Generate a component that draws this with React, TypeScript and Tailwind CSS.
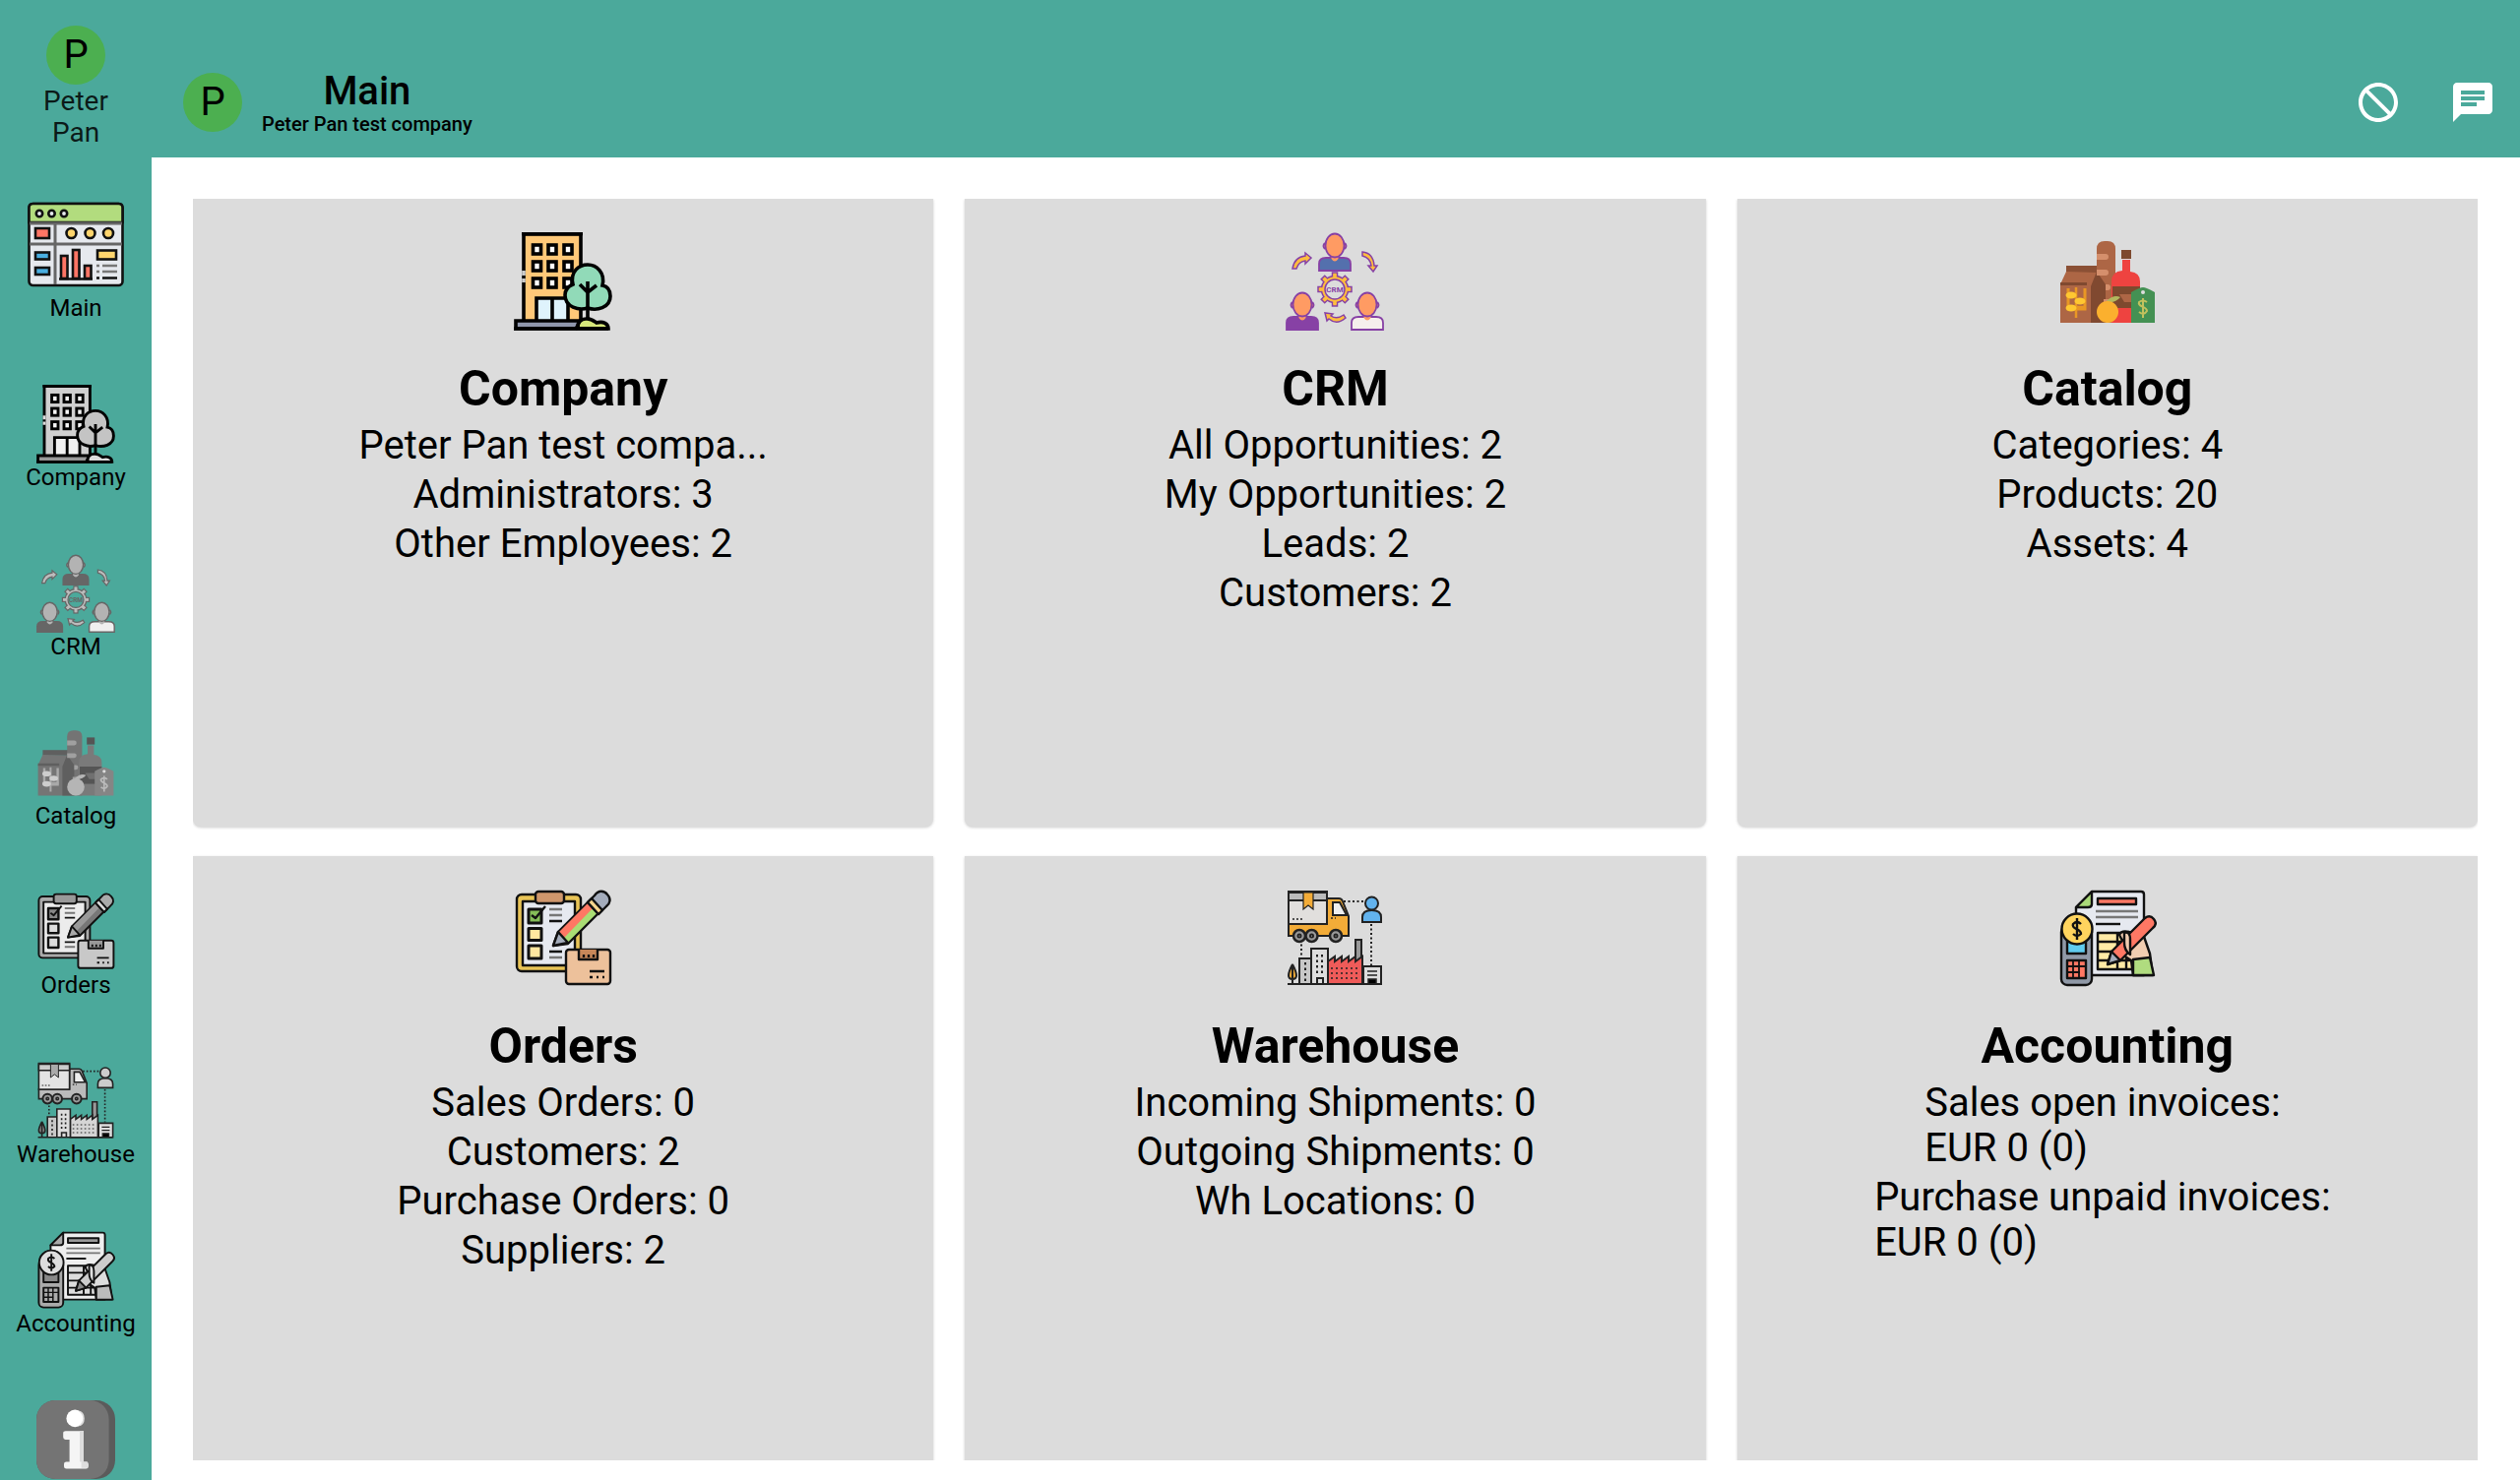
import React from "react";

type P = { mono?: boolean; className?: string };

const K = "#111";

function Svg({ children, className, box = "0 0 100 100" }: { children: React.ReactNode; className?: string; box?: string }) {
  return <svg viewBox={box} className={className} aria-hidden="true">{children}</svg>;
}

function MainIcon({ className }: P) {
  return (
    <Svg className={className}>
      <g stroke={K} strokeWidth="2.6">
        <rect x="2.5" y="8" width="95" height="83" rx="4" fill="#e6e9ee" />
        <path d="M2.500 27V12q0-4 4-4h87q4 0 4 4v15z" fill="#b2dc7e" />
        <g fill="#e6e9ee"><circle cx="13" cy="18" r="3.200" /><circle cx="25.500" cy="18" r="3.200" /><circle cx="38" cy="18" r="3.200" /></g>
        <g stroke="#666" strokeWidth="3"><path d="M3 28h94M3 49h94M29 28v62" /></g>
        <rect x="9" y="33" width="14" height="10" fill="#ff7565" />
        <g fill="#ffd56d"><circle cx="45.500" cy="38" r="5" /><circle cx="64.500" cy="38" r="5" /><circle cx="83" cy="38" r="5" /></g>
        <g fill="#49aee0"><rect x="9" y="57.500" width="14" height="7" /><rect x="9" y="73" width="14" height="7" /></g>
        <g fill="#ff7565"><rect x="35" y="61" width="6.500" height="23" /><rect x="47" y="55" width="6.500" height="29" /><rect x="59" y="71" width="6.500" height="13" /></g>
        <rect x="72" y="55.500" width="19" height="9" fill="#ffd56d" />
        <path d="M33 84.500h34" />
        <path d="M71 71h3M71 77h3M77 71h15M77 77h15" stroke="#777" />
        <path d="M71 83.500h3M77 83.500h15" />
      </g>
    </Svg>
  );
}

function CompanyIcon({ mono, className }: P) {
  const wall = mono ? "#d0d0d0" : "#ffc878";
  const tree = mono ? "#c4c4c4" : "#91dab8";
  return (
    <Svg className={className}>
      <g stroke="#000" strokeWidth="3.6">
        <path d="M10 89V2h58v87" fill={wall} />
        <path d="M8 1.500h62" />
        <path d="M10 39v5M10 47v4" stroke={mono ? "#ddd" : "#ccc"} />
        <g fill={mono ? "#f5f5f5" : "#fff"}>
          <rect x="19.500" y="13" width="8" height="9" /><rect x="35" y="13" width="8" height="9" /><rect x="51" y="13" width="8" height="9" />
          <rect x="19.500" y="30" width="8" height="9" /><rect x="35" y="30" width="8" height="9" /><rect x="51" y="30" width="8" height="9" />
          <rect x="19.500" y="47" width="8" height="9" /><rect x="35" y="47" width="8" height="9" /><rect x="51" y="47" width="8" height="9" />
        </g>
        <path d="M23 89V67h32v22M39 67v22" fill={mono ? "#f0f0f0" : "#dff3fc"} />
        <path d="M2 98v-8h66l-5 8z" fill={mono ? "#999" : "#9097ad"} />
        <path d="M75 77C66 80 52 76 52 64c0-6 3-9 8-11-3-13 6-20 15-20s18 8 15 21c5 1 8 5 8 11 0 12-14 15-23 12z" fill={tree} />
        <path d="M75 50v38M67 53l8 8 9-7" fill="none" />
        <path d="M65 98c-1-7 4-10 8-10 5-1 8 2 11 4 7-2 12 1 12 6z" fill={mono ? "#ddd" : "#d7e87b"} />
        <path d="M0 98h96" />
      </g>
    </Svg>
  );
}

function Person({ x, y, head, coat, line }: { x: number; y: number; head: string; coat: string; line: string }) {
  return (
    <g transform={`translate(${x} ${y})`} stroke={line} strokeWidth="1.8">
      <path d="M-10 10q-3 3 0 6M10 10q3 3 0 6" fill={head} />
      <path d="M-16 38V31q0-6 7-6H9q7 0 7 6v7z" fill={coat} />
      <path d="M-3.500 20v6q3.500 5 7 0v-6z" fill={head} stroke="none" />
      <ellipse cx="0" cy="12.500" rx="9.500" ry="12" fill={head} />
    </g>
  );
}

const teeth = [0, 45, 90, 135, 180, 225, 270, 315];

function CrmIcon({ mono, className }: P) {
  const line = mono ? "#666" : "#8741a5";
  const head = mono ? "#b3b3b3" : "#ff9b63";
  const gold = mono ? "#bcbcbc" : "#ffbd3e";
  return (
    <Svg className={className}>
      <Person x={50} y={1} head={head} coat={mono ? "#666" : "#5470ad"} line={line} />
      <Person x={17} y={61} head={head} coat={mono ? "#666" : "#8741a5"} line={line} />
      <Person x={83} y={61} head={head} coat={mono ? "#f0f0f0" : "#f6efec"} line={line} />
      <g fill={gold} stroke={line} strokeWidth="1.500">
        <path d="M7 37q2-12 13-13v-3l6 5-6 6v-3q-7 1-9 8zM78 20q11 1 12 14h3l-4 6-5-6h3q-1-8-9-10zM61 87q-9 8-17 1l-2 2-2-8 8 1-2 2q6 4 13-1z" />
        {teeth.map((a) => <rect key={a} x="47.500" y="41" width="5" height="6" transform={`rotate(${a} 50 58)`} />)}
        <circle cx="50" cy="58" r="13.500" />
        {teeth.map((a) => <rect key={a} x="48.200" y="43" width="3.600" height="4" stroke="none" transform={`rotate(${a} 50 58)`} />)}
        <circle cx="50" cy="58" r="10" fill={mono ? "#4ba99b" : "#dcdcdc"} />
      </g>
      <text x="50" y="61" textAnchor="middle" fill={line} className="font-['Roboto',sans-serif] text-[8px] font-bold">CRM</text>
    </Svg>
  );
}

function CatalogIcon({ mono, className }: P) {
  const c = (m: string, f: string) => (mono ? m : f);
  return (
    <Svg className={className}>
      <path d="M8 34h32v7H8z" fill={c("#5f5f5f", "#8b5035")} />
      <path d="M39 92V17q0-8 8-8h3q8 0 8 8v75z" fill={c("#747474", "#ad6645")} />
      <path d="M8 40 2 53v39h37V41z" fill={c("#757575", "#ad6645")} />
      <path d="M2 51h27v3H2zM33 92V55l6-15 9 13v39z" fill={c("#5f5f5f", "#804930")} />
      <path d="M39 22h9q3 0 3 3t-3 3h-9zM39 38h9q3 0 3 3t-3 3h-9zM48 53h2q3 0 3 3t-3 3h-2zM46 68h7v5h-7z" fill={c("#a0a0a0", "#d58f6c")} />
      <path d="M65 28h8v12q10 1 10 10v42H54V50q0-10 11-11z" fill={c("#7a7a7a", "#ee4340")} />
      <path d="M64 18h10v9H64z" fill={c("#555", "#7d492e")} />
      <path d="M55 55h28v22H55z" fill={c("#555", "#7d492e")} />
      <path d="M62 63h22v8H67z" fill={c("#707070", "#ad6645")} />
      <path d="M74 92V61q9-5 12-5t12 5v31z" fill={c("#858585", "#449153")} />
      <circle cx="86" cy="61" r="2" fill={c("#ddd", "#ddd")} />
      <path d="M90 71q-4-3-8 0c-2 5 8 4 8 9q-3 5-8 1M86 67v20" fill="none" stroke={c("#bbb", "#c2c15d")} strokeWidth="2" />
      <path d="M49 70q7-7 14-4-5 6-12 5z" fill={c("#b5b5b5", "#b2b85e")} />
      <circle cx="50" cy="81" r="11" fill={c("#b5b5b5", "#fbb02e")} />
      <path d="M10 57v21h17V57" fill="none" stroke={c("#aaa", "#e99725")} strokeWidth="3" />
      <path d="M18 56v31M8 76h20" stroke={c("#aaa", "#e99725")} strokeWidth="2.500" />
      <g fill={c("#cdcdcd", "#ffc731")}><ellipse cx="13" cy="64" rx="5.500" ry="3.500" /><ellipse cx="22" cy="70" rx="5.500" ry="3.500" /><ellipse cx="13" cy="77" rx="5.500" ry="3.500" /></g>
    </Svg>
  );
}

function OrdersIcon({ mono, className }: P) {
  const c = (m: string, f: string) => (mono ? m : f);
  return (
    <Svg className={className}>
      <g stroke={K} strokeWidth="2.400" strokeLinejoin="round">
        <rect x="3" y="5" width="65" height="78" rx="5" fill={c("#aaa", "#e9c456")} />
        <path d="M9 12h53v65H9z" fill={c("#ececec", "#e6e9f0")} />
        <rect x="22" y="2" width="29" height="12" rx="3" fill={c("#999", "#cf976c")} />
        <g strokeWidth="3"><rect x="15" y="20" width="13" height="14" fill={c("#888", "#85bd58")} /><rect x="15" y="39.500" width="13" height="12" fill={c("#ddd", "#ffe7a0")} /><rect x="15" y="57" width="13" height="13" fill={c("#ddd", "#ffe7a0")} /></g>
        <path d="m18 26 4 3 10-12" fill="none" />
        <path d="M36 20h13M36 26h13M36 69h13" stroke="#777" /><path d="M36 32h13M36 63h13" />
        <path d="m40 57 5-14 33-33 11 11-34 34z" fill={c("#777", "#aadd74")} />
        <path d="m46 43 32-32 5 5-32 33z" fill={c("#999", "#ff7864")} stroke="none" />
        <path d="m40 57 5-14 10 11z" fill={c("#aaa", "#a4acbb")} />
        <path d="m75 13 7-7c4-6 10-5 13-1 4 4 3 9-1 12l-8 8z" fill={c("#aaa", "#a4acbb")} />
        <path d="m75 13 11 12 4-4L79 9z" fill={c("#ddd", "#f7d58c")} />
        <rect x="53" y="61" width="45" height="35" rx="3" fill={c("#c8c8c8", "#edc19b")} />
        <path d="M66 61v10h19V61" fill={c("#999", "#c88759")} />
        <path d="M71 69v-3M76 69v-3M81 69v-3M77 83h15M77 89h3M84 89h2M90 89h2" />
      </g>
    </Svg>
  );
}

function WarehouseIcon({ mono, className }: P) {
  const c = (m: string, f: string) => (mono ? m : f);
  return (
    <Svg className={className}>
      <g stroke="#222" strokeWidth="2">
        <path d="M59 12h20M87 35v42M16 51v17" strokeDasharray="2 2.500" fill="none" />
        <path d="M42 9h12q3 0 4 3l6 15v20H3V35h39z" fill={c("#bbb", "#f3ac38")} />
        <path d="M3 2h39v33H3z" fill={c("#e4e4e4", "#e1dfdd")} />
        <path d="M3 3h39v8H3z" fill={c("#ccc", "#bbb")} />
        <path d="M18 3h10v17l-5-4-5 4z" fill={c("#aaa", "#f3ac38")} strokeWidth="1.200" />
        <path d="M48 13h7l7 13H48z" fill="#eee" />
        <path d="M7 30h11M46 29h5" strokeDasharray="2 2" strokeWidth="1.500" />
        <g fill="#999" strokeWidth="2.500"><circle cx="14" cy="47" r="6" /><circle cx="26.500" cy="47" r="6" /><circle cx="51" cy="47" r="6" /></g>
        <g fill="#eee"><circle cx="14" cy="47" r="1.500" /><circle cx="26.500" cy="47" r="1.500" /><circle cx="51" cy="47" r="1.500" /></g>
        <path d="M78 33v-5q0-7 9.500-7t9.500 7v5z" fill={c("#ccc", "#62b3ee")} />
        <circle cx="87.500" cy="14" r="6.500" fill={c("#ccc", "#62b3ee")} />
        <path d="M71 74V51h6v30" fill="#999" />
        <path d="M43 96V73l7-5v5l7-5v5l7-5v5l7-5v5l7-5v28z" fill={c("#d5d5d5", "#ef5b59")} />
        <path d="M14 96V70h12v26" fill="#c8c8c8" /><path d="M26 96V60h17v36" fill="#ddd" />
        <path d="M32 66v21M37 66v21M20 74v20" strokeDasharray="2.500 3" />
        <path d="M46 80h28M46 85h28M46 90h28" strokeDasharray="2 3" strokeWidth="1.500" />
        <path d="M32 96v-6h6v6M79 96V78h18v18z" fill="#ddd" /><path d="M83 83h10M83 87h10M84 95v-4h8v4" strokeWidth="1.500" />
        <path d="M7 76q-8 15 0 15t0-15v19" fill={c("#888", "#f3ac38")} />
        <path d="M2 96h95" />
      </g>
    </Svg>
  );
}

function AccountingIcon({ mono, className }: P) {
  const c = (m: string, f: string) => (mono ? m : f);
  return (
    <Svg className={className}>
      <g stroke={K} strokeWidth="2.400" strokeLinejoin="round">
        <path d="M18 87V18L34 2h50q3 0 3 3v82z" fill={c("#eee", "#e6e9f0")} />
        <path d="M18 18 34 2v13q0 3-4 3z" fill={c("#aaa", "#aad978")} />
        <path d="M40 9h39v6H40z" fill={c("#999", "#ff7864")} />
        <path d="M38 22h43M38 28h43" stroke="#777" /><path d="M38 35h25" />
        <path d="M40 44h41v37H40z" fill={c("#ddd", "#ffeaa5")} />
        <path d="M40 53h40M40 63h40M40 72h40M60 44v37M69 63v18" />
        <path d="M62 46q2-5 10-3l14 2 7 20 3 22H76l-2-15-6-4-2-14z" fill={c("#ddd", "#f1cdb1")} />
        <path d="m76 71 17-2 4 18H76z" fill={c("#bbb", "#b0dc7f")} />
        <path d="m50 76 4-13 34-34q5-4 9 1t-1 9L63 72z" fill={c("#ccc", "#ff7864")} />
        <path d="m50 76 4-13 9 9z" fill={c("#888", "#a4acbb")} />
        <path d="M67 44q6-2 6 7v15q-6-4-6-12z" fill={c("#ddd", "#f1cdb1")} />
        <rect x="3" y="37" width="31" height="60" rx="6" fill={c("#aaa", "#9099a7")} />
        <path d="M9 52h19v13H9z" fill={c("#888", "#60ccef")} />
        <path d="M9 72h19v18H9z" fill={c("#aaa", "#ff7864")} /><path d="M15 72v18M21 72v18M9 78h19M9 84h13" strokeWidth="1.800" />
        <circle cx="19" cy="40" r="15.500" fill={c("#ddd", "#ffd45e")} />
        <path d="M23 35q-4-4-8 0c-2 6 8 4 8 10q-4 4-8 0M19 29v22" fill="none" />
      </g>
    </Svg>
  );
}

function InfoIcon({ className }: P) {
  return (
    <Svg className={className}>
      <rect width="100" height="100" rx="24" fill="#5b5b5b" />
      <rect width="92" height="100" rx="24" fill="#747474" />
      <ellipse cx="49" cy="23" rx="11" ry="11" fill="#fff" />
      <path d="M53 13q12 10 0 20 8-1 8-10t-8-10z" fill="#ddd" />
      <path d="M34 41q0-2 3-2h23v39h3q3 0 3 3v3q0 3-3 3H38q-3 0-3-3v-3q0-3 3-3h4V50h-5q-3 0-3-3z" fill="#f5f5f5" />
      <path d="M55 39h5v39h5v8h-8v-8h-2z" fill="#ddd" />
    </Svg>
  );
}

type Card = { title: string; Icon: (p: P) => React.ReactElement; lines: string[] };

const cards: Card[] = [
  { title: "Company", Icon: CompanyIcon, lines: ["Peter Pan test compa...", "Administrators: 3", "Other Employees: 2"] },
  { title: "CRM", Icon: CrmIcon, lines: ["All Opportunities: 2", "My Opportunities: 2", "Leads: 2", "Customers: 2"] },
  { title: "Catalog", Icon: CatalogIcon, lines: ["Categories: 4", "Products: 20", "Assets: 4"] },
  { title: "Orders", Icon: OrdersIcon, lines: ["Sales Orders: 0", "Customers: 2", "Purchase Orders: 0", "Suppliers: 2"] },
  { title: "Warehouse", Icon: WarehouseIcon, lines: ["Incoming Shipments: 0", "Outgoing Shipments: 0", "Wh Locations: 0"] },
  { title: "Accounting", Icon: AccountingIcon, lines: ["Sales open invoices: \nEUR 0 (0)", "Purchase unpaid invoices: \nEUR 0 (0)"] },
];

function Avatar() {
  return <span className="flex size-[60px] shrink-0 items-center justify-center rounded-full bg-[#4caf50] text-[40px] leading-none text-black">P</span>;
}

export default function App() {
  return (
    <div className="flex h-screen overflow-hidden bg-[#4ba99b] font-['Roboto',sans-serif] text-black">
      <nav className="flex w-[154px] shrink-0 flex-col items-center overflow-hidden pt-[26px]">
        <a href="#user" className="flex flex-col items-center">
          <Avatar />
          <span className="mt-px w-20 text-center text-[28px] leading-8 text-black/85">Peter Pan</span>
        </a>
        <a href="#main" className="mt-12 flex shrink-0 flex-col items-center">
          <MainIcon className="size-[100px]" />
          <span className="text-2xl leading-7">Main</span>
        </a>
        <div className="mt-16 flex flex-col gap-16">
          {cards.map(({ title, Icon }) => (
            <a key={title} href={`#${title.toLowerCase()}`} className="flex shrink-0 flex-col items-center">
              <Icon mono className="size-20" />
              <span className="text-2xl leading-7">{title}</span>
            </a>
          ))}
          <a href="#about" aria-label="About" className="flex shrink-0 flex-col items-center">
            <InfoIcon className="size-20" />
          </a>
        </div>
      </nav>
      <div className="flex min-w-0 flex-1 flex-col">
        <header className="flex h-[160px] shrink-0 items-center pt-12 pr-6 pl-8">
          <Avatar />
          <div className="ml-5 flex flex-col items-center pt-0.5">
            <h1 className="text-[40px] leading-[42px] font-medium">Main</h1>
            <p className="text-xl leading-6 font-medium">Peter Pan test company</p>
          </div>
          <div className="ml-auto flex gap-12">
            <button aria-label="Disconnected">
              <Svg box="0 0 24 24" className="size-12 fill-white">
                <path d="M12 2C6.480 2 2 6.480 2 12s4.480 10 10 10 10-4.480 10-10S17.520 2 12 2zM4 12c0-4.420 3.580-8 8-8 1.850 0 3.550.63 4.900 1.690L5.690 16.900C4.630 15.550 4 13.850 4 12zm8 8c-1.850 0-3.550-.63-4.900-1.690L18.310 7.100C19.370 8.450 20 10.150 20 12c0 4.420-3.580 8-8 8z" transform="matrix(-1 0 0 1 24 0)" />
              </Svg>
            </button>
            <button aria-label="Chat">
              <Svg box="0 0 24 24" className="size-12 fill-white">
                <path d="M20 2H4c-1.100 0-1.990.9-1.990 2L2 22l4-4h14c1.100 0 2-.9 2-2V4c0-1.100-.9-2-2-2zM6 9h12v2H6V9zm8 5H6v-2h8v2zm4-6H6V6h12v2z" />
              </Svg>
            </button>
          </div>
        </header>
        <main className="min-h-0 flex-1 bg-white pt-[42px] pr-[43px] pb-5 pl-[42px]">
          <div className="grid h-full auto-rows-[638px] grid-cols-3 gap-x-8 gap-y-[30px] overflow-hidden">
            {cards.map(({ title, Icon, lines }) => (
              <section key={title} className="flex flex-col items-center rounded-b-lg bg-[#dcdcdc] pt-[34px] shadow-[0_1px_3px_rgba(0,0,0,0.2)]">
                <Icon className="size-[100px]" />
                <h2 className="mt-[30px] mb-0.5 text-[50px] leading-[58px] font-bold">{title}</h2>
                {lines.map((line) => (
                  <p key={line} className="mt-1 text-[40px] leading-[46px] whitespace-pre">{line}</p>
                ))}
              </section>
            ))}
          </div>
        </main>
      </div>
    </div>
  );
}
